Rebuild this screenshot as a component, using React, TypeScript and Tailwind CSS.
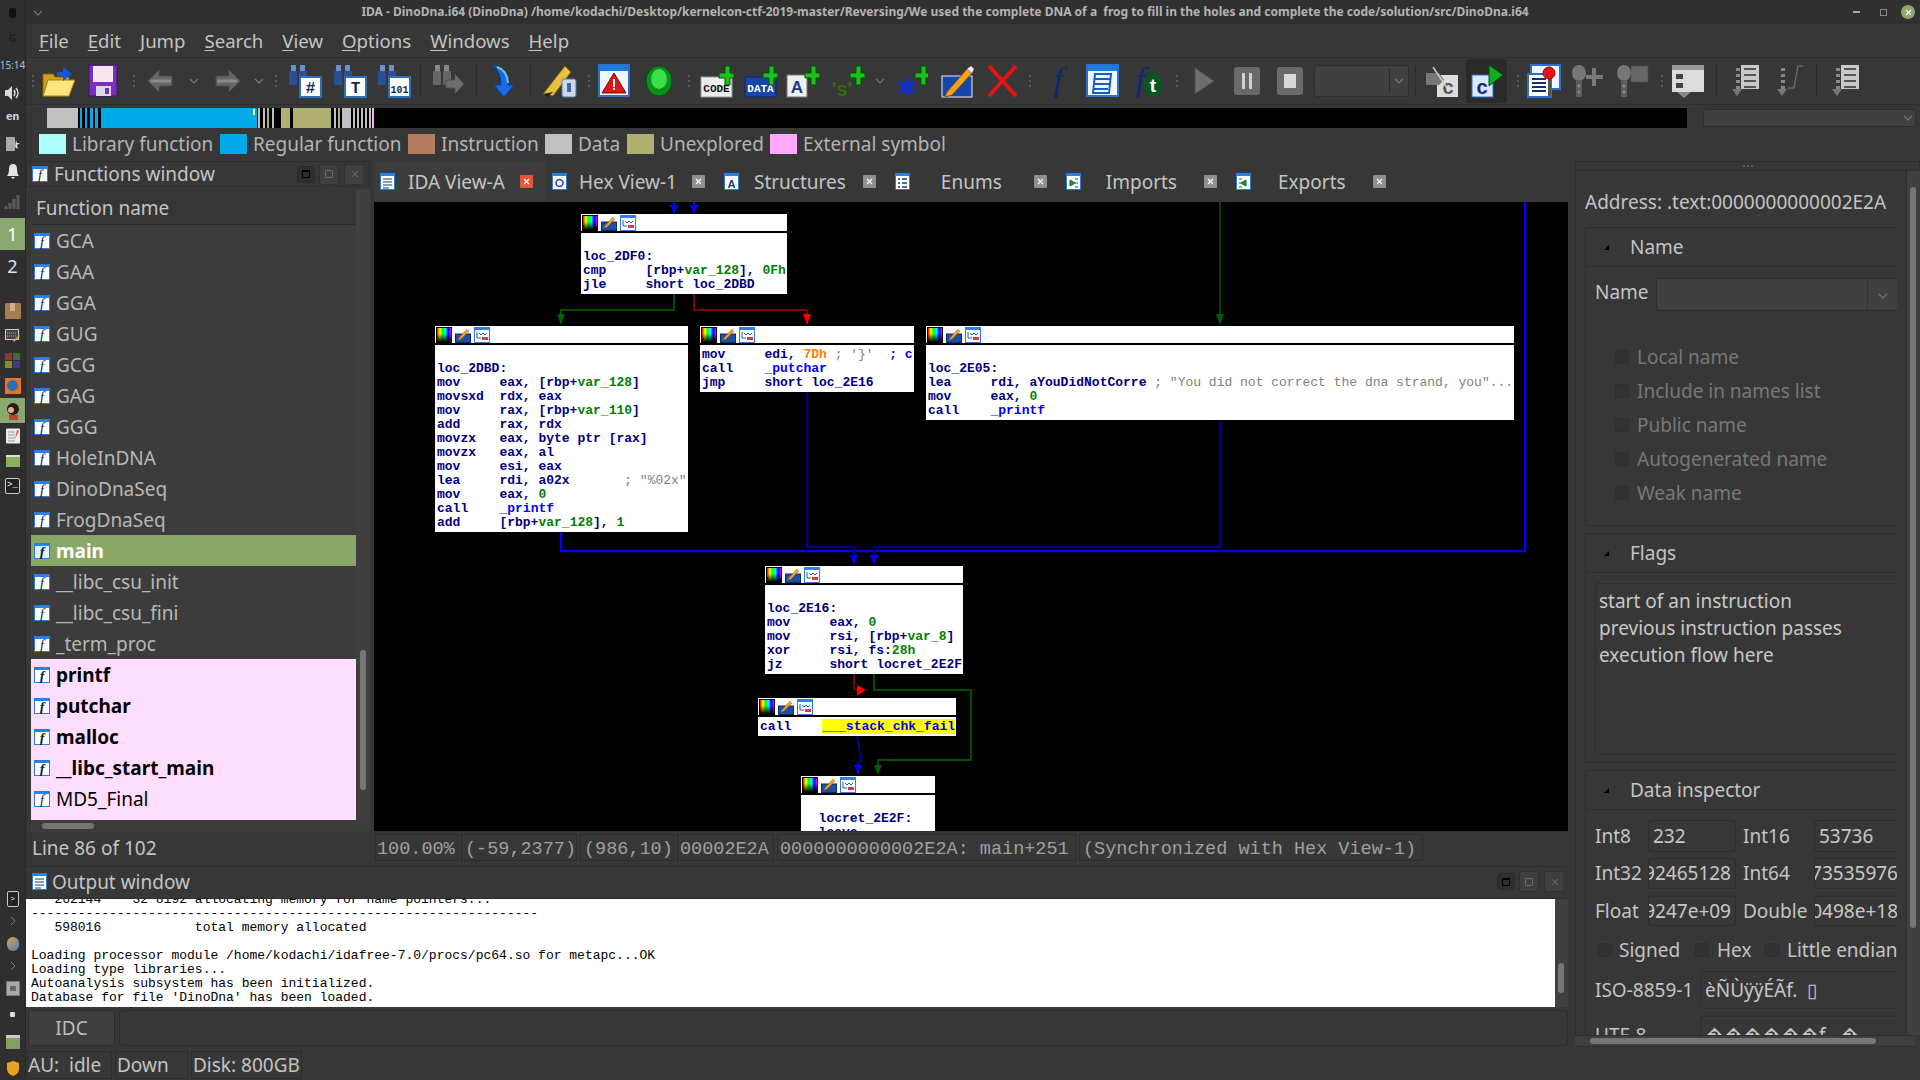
import type { ReactNode } from "react";
import { X } from "lucide-react";

const MONO = "font-['Liberation_Mono',monospace]";

function I({ w, h = 34, children }: { w: number; h?: number; children: ReactNode }) {
  return (
    <svg width={w} height={h} viewBox={`0 0 ${w} ${h}`} className="block shrink-0">
      {children}
    </svg>
  );
}

function Dots() {
  return (
    <span className="flex w-[2px] flex-col gap-[3px]">
      <span className="h-[2px] bg-[#5a5a5a]" />
      <span className="h-[2px] bg-[#5a5a5a]" />
      <span className="h-[2px] bg-[#5a5a5a]" />
    </span>
  );
}

function Sep() {
  return <span className="block h-[32px] w-px bg-[#2a2a2a]" />;
}

function Chev() {
  return (
    <I w={10} h={10}>
      <path d="M1 3 L5 7 L9 3" fill="none" stroke="#777" strokeWidth="1.2" />
    </I>
  );
}

function Plus() {
  return <path d="M19 9 h6 v-7 h5 v7 h4 v5 h-4 v7 h-5 v-7 h-6 z" fill="#19c31c" stroke="#064d08" strokeWidth="1" />;
}

function Binoc({ label, gray }: { label?: string; gray?: boolean }) {
  const c = gray ? "#666" : "#2a4f98";
  return (
    <I w={34}>
      <rect x="3" y="1" width="5" height="6" fill={gray ? "#888" : "#6d8fce"} />
      <rect x="12" y="1" width="5" height="6" fill={gray ? "#888" : "#6d8fce"} />
      <rect x="1" y="7" width="8" height="14" rx="1" fill={c} />
      <rect x="11" y="7" width="8" height="14" rx="1" fill={c} />
      {gray ? (
        <path d="M14 16 h9 v-6 l9 10 l-9 10 v-6 h-9 z" fill="#6e6e6e" stroke="#4e4e4e" />
      ) : (
        <>
          <rect x="12" y="13" width="21" height="20" fill="#fff" stroke="#2f6fb5" strokeWidth="2" />
          <text x="22.5" y="29" textAnchor="middle" fontSize={label === "101" ? 10 : 16} fontWeight="700" fill="#0c2a55" fontFamily="Liberation Mono">
            {label}
          </text>
        </>
      )}
    </I>
  );
}

function Win({ w = 33, children }: { w?: number; children?: ReactNode }) {
  return (
    <I w={w}>
      <rect x="1" y="1" width={w - 2} height="31" fill="#eef6ff" stroke="#2d6fc9" strokeWidth="2" />
      <rect x="2" y="2" width={w - 4} height="5" fill="#1a7be0" />
      {children}
    </I>
  );
}

function GrayPin({ extra }: { extra: ReactNode }) {
  return (
    <I w={33}>
      <ellipse cx="8" cy="9" rx="7" ry="8" fill="#777" />
      <rect x="5" y="16" width="6" height="17" fill="#5e5e5e" />
      <circle cx="8" cy="22" r="1.5" fill="#888" />
      <circle cx="8" cy="28" r="1.5" fill="#888" />
      {extra}
    </I>
  );
}

function GrayList({ w = 32, bars = true }: { w?: number; bars?: boolean }) {
  return (
    <I w={w}>
      {bars && <rect x="12" y="1" width="18" height="24" fill="#c8c8c8" />}
      {[4, 10, 16, 22].map((y) => (
        <g key={y}>
          <rect x="7" y={y} width="4" height="3" fill="#888" />
          {bars && <rect x="15" y={y} width="12" height="2" fill="#555" />}
        </g>
      ))}
      {!bars && <path d="M14 24 L20 24 L24 2 L29 2" fill="none" stroke="#666" strokeWidth="1.5" />}
      <path d="M3 25 h10 l-5 7 z" fill="#777" />
    </I>
  );
}

function FIcon({ size = 16, light }: { size?: number; light?: boolean }) {
  return (
    <svg width={size} height={size} viewBox="0 0 16 16" className="block shrink-0">
      <rect x="0.5" y="0.5" width="15" height="15" fill={light ? "#dff2ff" : "#fff"} stroke="#2f78dc" />
      <rect x="1" y="1" width="14" height="2" fill="#1d87ea" />
      <text x="8" y="13.5" textAnchor="middle" fontSize="14" fontStyle="italic" fontFamily="Liberation Serif" fill="#0b1a44">
        f
      </text>
    </svg>
  );
}

function TabIcon({ kind }: { kind: "list" | "hex" | "a" | "enum" | "imp" | "exp" }) {
  return (
    <svg width="15" height="17" viewBox="0 0 15 17" className="block shrink-0">
      <rect x="0.5" y="0.5" width="14" height="16" fill="#fff" stroke="#2f78dc" />
      <rect x="1" y="1" width="13" height="2" fill="#1d87ea" />
      {kind === "list" && <path d="M3 6 h9 M3 9 h9 M3 12 h9 M3 15 h6" stroke="#123a7c" strokeWidth="1" />}
      {kind === "hex" && <circle cx="7.5" cy="10" r="3.5" fill="none" stroke="#2b3fc6" strokeWidth="1.6" />}
      {kind === "a" && (
        <text x="7.5" y="14.5" textAnchor="middle" fontSize="11" fontWeight="700" fontFamily="Liberation Sans" fill="#123a7c">
          A
        </text>
      )}
      {kind === "enum" && <path d="M3 6 h2 M7 6 h5 M3 10 h2 M7 10 h5 M3 14 h2 M7 14 h5" stroke="#123a7c" strokeWidth="1.4" />}
      {kind === "imp" && <path d="M9 10 l-5 -3 v6 z M9 6 h3 M9 10 h3 M9 14 h3" fill="#0e9a2d" stroke="#0e6a2d" strokeWidth="1" />}
      {kind === "exp" && <path d="M5 10 l5 -3 v6 z M3 6 h3 M3 10 h3 M3 14 h3" fill="#0e9a2d" stroke="#0e6a2d" strokeWidth="1" />}
    </svg>
  );
}

function TabClose({ active }: { active?: boolean }) {
  return (
    <span className={active ? "flex h-[13px] w-[13px] items-center justify-center rounded-[1px] bg-[#e4573c]" : "flex h-[13px] w-[13px] items-center justify-center rounded-[1px] bg-[#8f8f8f]"}>
      <X size={9} color="#fff" strokeWidth={3} />
    </span>
  );
}

function PanelButtons() {
  return (
    <span className="flex items-center">
      <span className="flex h-[17px] w-[18px] items-center justify-center rounded-[3px] border border-[#2c2c2c] bg-[#2f2f2f]">
        <span className="block h-[8px] w-[8px] border border-t-2 border-black" />
      </span>
      <span className="ml-[4px] flex h-[21px] w-[20px] items-center justify-center rounded-[3px] border border-[#2f2f2f] bg-[#3f3f3f]">
        <span className="block h-[8px] w-[8px] rounded-[1px] border border-[#6a6a6a]" />
      </span>
      <span className="ml-[5px] flex h-[21px] w-[21px] items-center justify-center rounded-[3px] border border-[#2f2f2f] bg-[#3f3f3f]">
        <X size={10} color="#6a6a6a" strokeWidth={2.5} />
      </span>
    </span>
  );
}

function NodeHead() {
  return (
    <div className="flex h-[19px] items-center gap-[3px] border-b-2 border-black bg-white pl-[1px]">
      <span className="block h-[16px] w-[16px] border border-black bg-[linear-gradient(to_bottom,transparent_40%,#000),linear-gradient(to_right,#f00,#ff0,#0f0,#0ff,#00f,#f0f)]" />
      <svg width="16" height="16" viewBox="0 0 16 16" className="block shrink-0">
        <rect x="0.5" y="7" width="15" height="8.5" fill="#1d4fa8" stroke="#0c2a66" />
        <path d="M4 11 L12 2 L14 4 L6 12 L3 13 z" fill="#f4a11f" stroke="#a86400" strokeWidth="0.5" />
        <path d="M12 2 L14 4 L15 2 L14 1 z" fill="#dfe7f5" />
      </svg>
      <svg width="16" height="16" viewBox="0 0 16 16" className="block shrink-0">
        <rect x="0.5" y="0.5" width="15" height="15" fill="#fff" stroke="#3b78d8" />
        <rect x="1" y="1" width="14" height="2" fill="#2b84e4" />
        <path d="M3 5 v6 M3 11 h4 M5 6 l2 2 l2 -2 l2 2 l2 -2" fill="none" stroke="#1d5ab8" />
        <rect x="8" y="10" width="6" height="3" fill="#e2363c" />
      </svg>
    </div>
  );
}

function Node({ className, children }: { className: string; children: ReactNode }) {
  return (
    <div className={`absolute overflow-hidden bg-white ${className}`}>
      <NodeHead />
      <pre className={`whitespace-pre px-[2px] pt-[3px] text-[13px] font-bold leading-[14px] text-[#000080] ${MONO}`}>{children}</pre>
    </div>
  );
}

const G = ({ children }: { children: ReactNode }) => <span className="text-[#008000]">{children}</span>;
const C = ({ children }: { children: ReactNode }) => <span className="font-normal text-[#808080]">{children}</span>;
const B = ({ children }: { children: ReactNode }) => <span className="text-[#0000ff]">{children}</span>;
const O = ({ children }: { children: ReactNode }) => <span className="text-[#ff8000]">{children}</span>;

function Graph() {
  return (
    <div className="relative h-[629px] w-[1194px] overflow-hidden bg-black">
      <svg width="1194" height="629" viewBox="374 202 1194 629" className="absolute left-0 top-0">
        <g fill="none">
          <path d="M1525 202 V551 H561 V532" stroke="#0000ff" strokeWidth="2.5" />
          <path d="M674 202 V206 M694 202 V206" stroke="#0000ff" strokeWidth="2" />
          <path d="M1220 202 V318" stroke="#005a00" strokeWidth="1.5" />
          <path d="M674 294 V310 H561 V320" stroke="#005000" strokeWidth="2" />
          <path d="M694 294 V310 H807 V320" stroke="#800000" strokeWidth="2" />
          <path d="M807 392 V547 H854 V556" stroke="#000090" strokeWidth="2" />
          <path d="M1220 420 V547 H874 V556" stroke="#000090" strokeWidth="2" />
          <path d="M854 674 V689 L857 690" stroke="#800000" strokeWidth="2" />
          <path d="M874 674 V690 H971 V760 H878 V766" stroke="#005000" strokeWidth="2" />
          <path d="M857 736 L861 760 L858 764 V768" stroke="#0000c0" strokeWidth="1.5" />
        </g>
        <path d="M670 205 h8 l-4 9 z M690 205 h8 l-4 9 z" fill="#0000ff" />
        <path d="M557 314 h8 l-4 11 z" fill="#006000" />
        <path d="M803 314 h8 l-4 11 z" fill="#ff0000" />
        <path d="M1216 314 h8 l-4 11 z" fill="#006000" />
        <path d="M850 555 h8 l-4 10 z M870 555 h8 l-4 10 z" fill="#0000ff" />
        <path d="M857 685 l9 5 l-9 6 z" fill="#ff0000" />
        <path d="M854 765 h8 l-4 10 z" fill="#0000ff" />
        <path d="M874 765 h8 l-4 10 z" fill="#006000" />
      </svg>

      <Node className="left-[207px] top-[12px] h-[80px] w-[206px]">
        {"\nloc_2DF0:\ncmp     [rbp+"}
        <G>var_128</G>
        {"], "}
        <G>0Fh</G>
        {"\njle     short loc_2DBD"}
      </Node>

      <Node className="left-[61px] top-[124px] h-[206px] w-[253px]">
        {"\nloc_2DBD:\nmov     eax, [rbp+"}
        <G>var_128</G>
        {"]\nmovsxd  rdx, eax\nmov     rax, [rbp+"}
        <G>var_110</G>
        {"]\nadd     rax, rdx\nmovzx   eax, byte ptr [rax]\nmovzx   eax, al\nmov     esi, eax\nlea     rdi, a02x       "}
        <C>{'; "%02x"'}</C>
        {"\nmov     eax, "}
        <G>0</G>
        {"\ncall    "}
        <B>_printf</B>
        {"\nadd     [rbp+"}
        <G>var_128</G>
        {"], "}
        <G>1</G>
      </Node>

      <Node className="left-[326px] top-[124px] h-[66px] w-[214px]">
        {"mov     edi, "}
        <O>7Dh</O> <C>{"; '}'"}</C>
        {"  "}
        <B>; c</B>
        {"\ncall    "}
        <B>_putchar</B>
        {"\njmp     short loc_2E16"}
      </Node>

      <Node className="left-[552px] top-[124px] h-[94px] w-[588px]">
        {"\nloc_2E05:\nlea     rdi, aYouDidNotCorre "}
        <C>{'; "You did not correct the dna strand, you"...'}</C>
        {"\nmov     eax, "}
        <G>0</G>
        {"\ncall    "}
        <B>_printf</B>
      </Node>

      <Node className="left-[391px] top-[364px] h-[108px] w-[198px]">
        {"\nloc_2E16:\nmov     eax, "}
        <G>0</G>
        {"\nmov     rsi, [rbp+"}
        <G>var_8</G>
        {"]\nxor     rsi, fs:"}
        <G>28h</G>
        {"\njz      short locret_2E2F"}
      </Node>

      <Node className="left-[384px] top-[496px] h-[38px] w-[198px]">
        {"call    "}
        <span className="bg-[#ffff00] text-[#0000ff]">___stack_chk_fail</span>
      </Node>

      <Node className="left-[427px] top-[574px] h-[80px] w-[134px]">
        {"\n  locret_2E2F:\n  leave"}
      </Node>
    </div>
  );
}

const functionNames = ["GCA", "GAA", "GGA", "GUG", "GCG", "GAG", "GGG", "HoleInDNA", "DinoDnaSeq", "FrogDnaSeq"];
const libcNames = ["__libc_csu_init", "__libc_csu_fini", "_term_proc"];
const externNames = ["printf", "putchar", "malloc", "__libc_start_main"];

function FnRow({ name, className, light }: { name: string; className: string; light?: boolean }) {
  return (
    <div className={`flex h-[31px] items-center gap-[6px] pl-[3px] text-[19px] ${className}`}>
      <FIcon light={light} />
      <span className="whitespace-pre pt-[2px]">{name}</span>
    </div>
  );
}

function FunctionsPanel() {
  return (
    <div className="flex w-[344px] shrink-0 flex-col">
      <div className="flex h-[26px] items-center border border-[#2d2d2d] pl-[5px] pr-[4px] text-[19px] text-[#c4c4c4]">
        <FIcon />
        <span className="ml-[6px] pt-[1px]">Functions window</span>
        <span className="ml-auto">
          <PanelButtons />
        </span>
      </div>
      <div className="mt-[3px] flex h-[642px] flex-col pl-[5px]">
        <div className="flex min-h-0 flex-1">
          <div className="flex w-[327px] flex-col overflow-hidden bg-[#3c3c3c] text-[#b8b8b8]">
            <div className="flex h-[35px] shrink-0 items-center border-b border-[#2d2d2d] bg-[#363636] pl-[5px] pt-[2px] text-[19px] text-[#c4c4c4]">Function name</div>
            {functionNames.map((n) => (
              <FnRow key={n} name={n} className="" />
            ))}
            <FnRow name="main" className="bg-[#89a868] font-bold text-white" light />
            {libcNames.map((n) => (
              <FnRow key={n} name={n} className="" />
            ))}
            <div className="flex-1 bg-[#ffddff] text-black">
              {externNames.map((n) => (
                <FnRow key={n} name={n} className="font-bold" />
              ))}
              <FnRow name="MD5_Final" className="" />
            </div>
          </div>
          <div className="flex w-[14px] flex-col bg-[#404040] pl-[4px]">
            <span className="mt-[460px] block h-[140px] w-[6px] rounded-full bg-[#767676]" />
          </div>
        </div>
        <div className="h-[12px] shrink-0 bg-[#3c3c3c] pl-[11px] pt-[3px]">
          <span className="block h-[6px] w-[52px] rounded-full bg-[#767676]" />
        </div>
      </div>
      <div className="flex h-[30px] items-center pl-[6px] pt-[3px] text-[19px] text-[#c4c4c4]">Line 86 of 102</div>
    </div>
  );
}

const tabs = [
  { label: "Hex View-1", kind: "hex", gap: "ml-[12px]", after: "ml-[15px]", next: "" },
  { label: "Structures", kind: "a", gap: "ml-[15px]", after: "ml-[17px]", next: "ml-[19px]" },
  { label: "Enums", kind: "enum", gap: "ml-[31px]", after: "ml-[32px]", next: "ml-[19px]" },
  { label: "Imports", kind: "imp", gap: "ml-[25px]", after: "ml-[27px]", next: "ml-[19px]" },
  { label: "Exports", kind: "exp", gap: "ml-[27px]", after: "ml-[27px]", next: "ml-[19px]" },
] as const;

function GraphColumn() {
  return (
    <div className="ml-[4px] flex w-[1194px] shrink-0 flex-col">
      <div className="flex h-[41px] items-center text-[19px] text-[#c4c4c4]">
        <div className="flex h-full w-[171px] items-center bg-[#3c3c3c] pl-[6px]">
          <TabIcon kind="list" />
          <span className="ml-[13px] pt-[2px]">IDA View-A</span>
          <span className="ml-[15px]">
            <TabClose active />
          </span>
        </div>
        <span className="w-[7px]" />
        {tabs.map((t) => (
          <div key={t.label} className={`flex items-center ${t.next}`}>
            <TabIcon kind={t.kind} />
            <span className={`pt-[2px] ${t.gap}`}>{t.label}</span>
            <span className={t.after}>
              <TabClose />
            </span>
          </div>
        ))}
      </div>
      <Graph />
      <div className={`flex h-[31px] items-center gap-[3px] border-t border-[#2d2d2d] pl-[1px] text-[18.5px] text-[#a0a0a0] ${MONO}`}>
        <span className="flex h-[27px] w-[83px] items-center border border-[#2d2d2d] pl-[1px] pt-[6px]">100.00%</span>
        <span className="flex h-[27px] w-[116px] items-center border border-[#2d2d2d] pl-[3px] pt-[6px]">(-59,2377)</span>
        <span className="flex h-[27px] w-[94px] items-center border border-[#2d2d2d] pl-[3px] pt-[6px]">(986,10)</span>
        <span className="flex h-[27px] w-[97px] items-center border border-[#2d2d2d] pl-[2px] pt-[6px]">00002E2A</span>
        <span className="flex h-[27px] w-[299px] items-center border border-[#2d2d2d] pl-[2px] pt-[6px]">0000000000002E2A: main+251</span>
        <span className="flex h-[27px] w-[344px] items-center border border-[#2d2d2d] pl-[3px] pt-[6px]">(Synchronized with Hex View-1)</span>
      </div>
    </div>
  );
}

function OutputPanel() {
  return (
    <div className="mt-[4px] flex w-[1542px] flex-col">
      <div className="flex h-[30px] items-center border-t border-[#2d2d2d] pl-[6px] pr-[3px] text-[19px] text-[#c4c4c4]">
        <TabIcon kind="list" />
        <span className="ml-[5px] pt-[2px]">Output window</span>
        <span className="ml-auto">
          <PanelButtons />
        </span>
      </div>
      <div className="mt-[2px] flex h-[109px] border-t border-[#2d2d2d]">
        <pre className={`h-full w-[1529px] overflow-hidden bg-white pl-[5px] text-[13px] leading-[14px] text-black ${MONO}`}>
          <div className="-mt-[6px]">
            {"   262144    32 8192 allocating memory for name pointers...\n-----------------------------------------------------------------\n   598016            total memory allocated\n\nLoading processor module /home/kodachi/idafree-7.0/procs/pc64.so for metapc...OK\nLoading type libraries...\nAutoanalysis subsystem has been initialized.\nDatabase for file 'DinoDna' has been loaded."}
          </div>
        </pre>
        <div className="flex-1 bg-[#404040] pl-[3px] pt-[64px]">
          <span className="block h-[30px] w-[6px] rounded-full bg-[#767676]" />
        </div>
      </div>
      <div className="mt-[3px] flex h-[36px] gap-[4px] pl-[2px]">
        <span className="flex w-[87px] items-center justify-center rounded-[3px] border border-[#2d2d2d] bg-[#3e3e3e] text-[19px] text-[#bdbdbd]">IDC</span>
        <span className="flex-1 rounded-[3px] border border-[#2d2d2d]" />
      </div>
      <div className="mt-[4px] flex h-[30px] items-center gap-[3px] pl-[1px] text-[19px] text-[#c4c4c4]">
        <span className="flex h-[28px] w-[85px] items-center whitespace-pre border border-[#2d2d2d]">AU:  idle</span>
        <span className="flex h-[28px] w-[73px] items-center border border-[#2d2d2d] pl-[1px]">Down</span>
        <span className="flex h-[28px] w-[111px] items-center border border-[#2d2d2d] pl-[1px]">Disk: 800GB</span>
      </div>
    </div>
  );
}

function Cb() {
  return <span className="block h-[14px] w-[14px] shrink-0 rounded-[2px] border border-[#2e2e2e] bg-[#323232]" />;
}

function GroupHead({ title }: { title: string }) {
  return (
    <div className="flex h-[40px] items-center border border-[#2d2d2d] pl-[18px]">
      <span className="block h-0 w-0 border-b-[5px] border-l-[5px] border-b-black border-l-transparent" />
      <span className="ml-[21px]">{title}</span>
    </div>
  );
}

function ValueBox({ value, className }: { value: string; className: string }) {
  return (
    <span className={`flex h-full items-center overflow-hidden whitespace-pre rounded-[3px] border border-[#2d2d2d] px-[4px] text-[#c8c8c8] ${className}`}>
      {value}
    </span>
  );
}

function InspectorRow({ a, av, b, bv, right, className }: { a: string; av: string; b: string; bv: string; right?: boolean; className: string }) {
  const j = right ? "justify-end" : "";
  return (
    <div className={`flex items-center ${className}`}>
      <span className="w-[53px] shrink-0">{a}</span>
      <ValueBox value={av} className={`w-[88px] shrink-0 ${j}`} />
      <span className="ml-[7px] w-[71px] shrink-0">{b}</span>
      <ValueBox value={bv} className={`w-[89px] shrink-0 ${j}`} />
    </div>
  );
}

function RightPanel() {
  return (
    <div className="ml-[4px] flex w-[345px] flex-col text-[19px] text-[#c4c4c4]">
      <div className="flex h-[10px] items-center justify-center gap-[2px] border border-[#2d2d2d]">
        <span className="h-[2px] w-[2px] bg-[#5a5a5a]" />
        <span className="h-[2px] w-[2px] bg-[#5a5a5a]" />
        <span className="h-[2px] w-[2px] bg-[#5a5a5a]" />
      </div>
      <div className="flex h-[864px] border-l border-[#2d2d2d]">
        <div className="w-[321px] shrink-0 overflow-hidden pl-[9px] pt-[16px]">
          <div className="flex h-[30px] items-center whitespace-pre">Address: .text:0000000000002E2A</div>
          <div className="mt-[10px] w-[321px]">
            <GroupHead title="Name" />
            <div className="h-[259px] border-x border-b border-[#2d2d2d] pl-[9px] pt-[11px]">
              <div className="flex h-[33px]">
                <span className="w-[61px] shrink-0">Name</span>
                <span className="flex w-[243px] rounded-[3px] border border-[#2d2d2d] bg-[#404040]">
                  <span className="flex-1" />
                  <span className="flex w-[31px] items-center justify-center border-l border-[#333] pt-[3px]">
                    <Chev />
                  </span>
                </span>
              </div>
              <div className="mt-[29px] pl-[20px] text-[#777]">
                {["Local name", "Include in names list", "Public name", "Autogenerated name", "Weak name"].map((n) => (
                  <div key={n} className="flex h-[34px] items-center gap-[8px]">
                    <Cb />
                    <span>{n}</span>
                  </div>
                ))}
              </div>
            </div>
            <div className="mt-[7px]">
              <GroupHead title="Flags" />
              <div className="h-[190px] border-x border-b border-[#2d2d2d] pl-[9px] pt-[10px]">
                <div className="h-[172px] w-[307px] rounded-[3px] border border-[#2d2d2d] pl-[3px] pt-[4px] leading-[27px] text-[#c8c8c8]">
                  start of an instruction
                  <br />
                  previous instruction passes
                  <br />
                  execution flow here
                </div>
              </div>
            </div>
            <div className="mt-[7px]">
              <GroupHead title="Data inspector" />
              <div className="h-[300px] border-x border-[#2d2d2d] pl-[9px] pt-[10px]">
                <InspectorRow a="Int8" av="232" b="Int16" bv="53736" className="h-[32px]" />
                <InspectorRow a="Int32" av="3892465128" b="Int64" bv="-4673535976" right className="mt-[6px] h-[31px]" />
                <InspectorRow a="Float" av="-1.19247e+09" b="Double" bv="1.10498e+18" right className="mt-[7px] h-[30px]" />
                <div className="mt-[14px] flex h-[20px] items-center pl-[3px]">
                  <Cb />
                  <span className="ml-[7px] w-[76px]">Signed</span>
                  <Cb />
                  <span className="ml-[8px] w-[48px]">Hex</span>
                  <Cb />
                  <span className="ml-[8px] whitespace-nowrap">Little endian</span>
                </div>
                <div className="mt-[11px] flex h-[38px] items-center">
                  <span className="w-[105px] shrink-0">ISO-8859-1</span>
                  <ValueBox value={"èÑÙÿÿÉÃf.  ▯"} className="w-[202px]" />
                </div>
                <div className="mt-[7px] flex h-[38px] items-center">
                  <span className="w-[105px] shrink-0">UTF-8</span>
                  <ValueBox value={"������f.  �"} className="w-[202px]" />
                </div>
              </div>
            </div>
          </div>
        </div>
        <div className="ml-[9px] w-[14px] shrink-0 border-l border-[#2d2d2d] bg-[#404040] pl-[3px] pt-[16px]">
          <span className="block h-[741px] w-[6px] rounded-full bg-[#767676]" />
        </div>
      </div>
      <div className="h-[12px] w-[340px] border-y border-[#2d2d2d] bg-[#3e3e3e] pl-[15px] pt-[2px]">
        <span className="block h-[6px] w-[286px] rounded-full bg-[#767676]" />
      </div>
    </div>
  );
}

const navSegments: [number, string][] = [
  [31, "#c0c0c0"], [2, "#000"], [2, "#00aae8"], [3, "#000"], [2, "#00aae8"], [3, "#000"], [3, "#00aae8"], [2, "#000"], [3, "#00aae8"], [3, "#000"], [2, "#00aae8"],
  [154, "#00aae8"], [1, "#000"], [2, "#c0c0c0"], [3, "#000"], [2, "#c0c0c0"], [2, "#000"], [2, "#b0b070"], [3, "#000"], [2, "#c0c0c0"], [7, "#000"], [9, "#b0b070"], [3, "#000"],
  [38, "#b0b070"], [3, "#000"], [2, "#c0c0c0"], [2, "#000"], [2, "#b0b070"], [2, "#000"], [9, "#c0c0c0"], [2, "#000"], [2, "#c0c0c0"], [2, "#000"], [2, "#c0c0c0"], [2, "#000"], [2, "#c0c0c0"], [2, "#000"], [2, "#c0c0c0"], [2, "#000"], [2, "#c0c0c0"], [1, "#000"], [2, "#ffaaff"],
];

const legend = [
  ["#aaffff", "Library function", "w-[181px]"],
  ["#00aae8", "Regular function", "w-[188px]"],
  ["#b27c5c", "Instruction", "w-[137px]"],
  ["#c0c0c0", "Data", "w-[82px]"],
  ["#b0b070", "Unexplored", "w-[143px]"],
  ["#ffaaff", "External symbol", "w-[190px]"],
] as const;

function DockIcon({ className, children }: { className: string; children: ReactNode }) {
  return <div className={`flex w-full shrink-0 items-center justify-center ${className}`}>{children}</div>;
}

function Dock() {
  return (
    <div className="flex h-[1080px] w-[26px] shrink-0 flex-col border-r border-[#262626] bg-[#2f2f2f] text-[#d0d0d0]">
      <DockIcon className="h-[26px]">
        <span className="block h-[10px] w-[7px] rounded-[2px] bg-[#111]" />
      </DockIcon>
      <DockIcon className="h-[24px] text-[11px] font-bold text-[#222]">G</DockIcon>
      <DockIcon className="h-[30px] text-[10px] text-[#a9bfd0]">15:14</DockIcon>
      <DockIcon className="h-[25px]">
        <I w={17} h={16}>
          <path d="M1 5 h3 l4 -4 v14 l-4 -4 h-3 z" fill="#d8d8d8" />
          <path d="M10 5 q2 3 0 6 M12 3 q4 5 0 10" fill="none" stroke="#d8d8d8" strokeWidth="1.4" />
        </I>
      </DockIcon>
      <DockIcon className={`h-[25px] text-[11px] font-bold text-[#d8e0e8] ${MONO}`}>en</DockIcon>
      <DockIcon className="h-[27px]">
        <I w={16} h={16}>
          <rect x="1" y="1" width="9" height="14" rx="1" fill="#aaa" />
          <path d="M11 4 l1 3 h3 l-3 2 l1 4 l-3 -2 z" fill="#ddd" />
        </I>
      </DockIcon>
      <DockIcon className="h-[28px]">
        <I w={14} h={16}>
          <path d="M7 1 q4 0 4 5 q0 5 2 7 h-12 q2 -2 2 -7 q0 -5 4 -5 z M5 14 h4 l-2 2 z" fill="#e4e4e4" />
        </I>
      </DockIcon>
      <DockIcon className="h-[33px]">
        <I w={17} h={16}>
          <path d="M2 12 v3 M6 9 v6 M10 5 v10 M14 1 v14" stroke="#5b5b5b" strokeWidth="3" />
        </I>
      </DockIcon>
      <DockIcon className="h-[32px] bg-[#8ba870] text-[18px] text-white">1</DockIcon>
      <DockIcon className="h-[32px] text-[18px] text-[#d8e4f0]">2</DockIcon>
      <div className="h-[16px]" />
      <DockIcon className="h-[25px]">
        <span className="flex h-[16px] w-[16px] justify-center rounded-[1px] bg-[#a67c50]">
          <span className="block h-[8px] w-[5px] bg-[#cfae88]" />
        </span>
      </DockIcon>
      <DockIcon className="h-[25px]">
        <I w={16} h={14}>
          <rect x="0.5" y="0.5" width="13" height="10" fill="#444" stroke="#ccc" />
          <path d="M2 4 h10 M2 7 h10" stroke="#aaa" strokeDasharray="1 1" />
          <path d="M8 12 l6 -6 l1 1 l-6 6 z" fill="#e8a23c" />
        </I>
      </DockIcon>
      <DockIcon className="h-[25px]">
        <span className="grid grid-cols-2 gap-px">
          <span className="block h-[7px] w-[7px] bg-[#8a3a3a]" />
          <span className="block h-[7px] w-[7px] bg-[#3c6a3c]" />
          <span className="block h-[7px] w-[7px] bg-[#8a8a30]" />
          <span className="block h-[7px] w-[7px] bg-[#453a8a]" />
        </span>
      </DockIcon>
      <DockIcon className="h-[25px]">
        <span className="flex h-[16px] w-[16px] items-center justify-center bg-[#e8761c]">
          <span className="block h-[11px] w-[11px] rounded-full bg-[#2f6fb0]" />
        </span>
      </DockIcon>
      <DockIcon className="h-[25px] bg-[#8ba870]">
        <I w={16} h={18}>
          <circle cx="8" cy="7" r="6" fill="#2a1a1a" />
          <circle cx="6" cy="8" r="3" fill="#e0b090" />
          <path d="M4 13 h9 v5 h-9 z" fill="#c8402a" />
        </I>
      </DockIcon>
      <DockIcon className="h-[25px]">
        <I w={16} h={16}>
          <rect x="1" y="0.5" width="14" height="15" rx="1" fill="#eee" />
          <path d="M3 4 h7 M3 7 h7 M3 10 h7 M3 13 h7" stroke="#999" />
          <path d="M10 11 l2 -9 l2 1 z" fill="#e2562a" />
        </I>
      </DockIcon>
      <DockIcon className="h-[25px]">
        <I w={16} h={14}>
          <rect x="1" y="1" width="14" height="3" fill="#ddd" />
          <rect x="1" y="3" width="14" height="10" fill="#8ab060" />
        </I>
      </DockIcon>
      <DockIcon className="h-[25px]">
        <span className={`flex h-[16px] w-[15px] items-center justify-center rounded-[2px] border border-[#ccc] bg-[#222] text-[9px] text-white ${MONO}`}>&gt;_</span>
      </DockIcon>
      <div className="flex-1" />
      <DockIcon className="h-[24px]">
        <span className={`flex h-[16px] w-[12px] items-center justify-center rounded-[2px] border border-[#ccc] bg-[#222] text-[7px] text-white ${MONO}`}>&gt;</span>
      </DockIcon>
      <DockIcon className="h-[20px] text-[#777]">
        <I w={6} h={10}>
          <path d="M1 1 l4 4 l-4 4" fill="none" stroke="#777" />
        </I>
      </DockIcon>
      <DockIcon className="h-[25px]">
        <span className="block h-[14px] w-[12px] rounded-full bg-[linear-gradient(135deg,#e8a23c,#3f7fcf)]" />
      </DockIcon>
      <DockIcon className="h-[20px]">
        <I w={6} h={10}>
          <path d="M1 1 l4 4 l-4 4" fill="none" stroke="#777" />
        </I>
      </DockIcon>
      <DockIcon className="h-[25px]">
        <span className="flex h-[15px] w-[14px] items-center justify-center border border-[#777] bg-[#aaa]">
          <span className="block h-[5px] w-[6px] bg-[#666]" />
        </span>
      </DockIcon>
      <DockIcon className="h-[26px]">
        <span className="block h-[5px] w-[5px] rounded-[1px] bg-[#ddd]" />
      </DockIcon>
      <DockIcon className="h-[30px]">
        <span className="flex h-[14px] w-[14px] flex-col">
          <span className="h-[3px] bg-[#ccc]" />
          <span className="flex-1 bg-[#7fa060]" />
        </span>
      </DockIcon>
      <DockIcon className="h-[23px]">
        <I w={12} h={15}>
          <path d="M6 0 l6 2 v6 q0 5 -6 7 q-6 -2 -6 -7 v-6 z" fill="#f0a020" />
        </I>
      </DockIcon>
    </div>
  );
}

function Toolbar() {
  return (
    <div className="flex h-[48px] items-center border-y border-[#2d2d2d]">
      <span className="ml-[6px]"><Dots /></span>
      <span className="ml-[8px]">
        <I w={34}>
          <path d="M1 10 h10 l2 3 h14 v19 h-26 z" fill="#d4a017" stroke="#8a6508" />
          <path d="M6 16 h27 l-6 16 h-26 z" fill="#ffe680" stroke="#a57c08" />
          <path d="M15 8 h6 v-5 l9 7 l-9 7 v-5 h-6 z" fill="#1357e0" />
        </I>
      </span>
      <span className="ml-[12px]">
        <I w={30}>
          <rect x="1" y="1" width="28" height="31" fill="#7b2fc0" stroke="#3c1470" />
          <rect x="5" y="2" width="20" height="16" fill="#f5e8f0" />
          <rect x="8" y="22" width="15" height="10" fill="#d8d8e8" />
          <rect x="17" y="24" width="4" height="6" fill="#7b2fc0" />
        </I>
      </span>
      <span className="ml-[15px]"><Dots /></span>
      <span className="ml-[12px]">
        <I w={26}>
          <path d="M1 17 l11 -11 v6 h13 v10 h-13 v6 z" fill="#666" stroke="#4e4e4e" />
          <path d="M4 17 h20" stroke="#8a8a8a" strokeWidth="3" />
        </I>
      </span>
      <span className="ml-[16px]"><Chev /></span>
      <span className="ml-[16px]">
        <I w={26}>
          <path d="M25 17 l-11 -11 v6 h-13 v10 h13 v6 z" fill="#666" stroke="#4e4e4e" />
          <path d="M2 17 h20" stroke="#8a8a8a" strokeWidth="3" />
        </I>
      </span>
      <span className="ml-[13px]"><Chev /></span>
      <span className="ml-[11px]"><Dots /></span>
      <span className="ml-[11px]"><Binoc label="#" /></span>
      <span className="ml-[11px]"><Binoc label="T" /></span>
      <span className="ml-[10px]"><Binoc label="101" /></span>
      <span className="ml-[9px]"><Sep /></span>
      <span className="ml-[11px]"><Binoc gray /></span>
      <span className="ml-[10px]"><Sep /></span>
      <span className="ml-[13px]">
        <I w={26}>
          <path d="M3 1 q15 2 15 20 h6 l-10 12 l-10 -12 h7 q0 -13 -8 -20 z" fill="#1b6be8" stroke="#0c3fa0" />
          <path d="M7 3 q10 3 11 16" fill="none" stroke="#5cc8f8" strokeWidth="2" />
        </I>
      </span>
      <span className="ml-[14px]"><Sep /></span>
      <span className="ml-[10px]">
        <I w={36}>
          <path d="M2 30 L16 12 L24 2 L30 8 L12 32 z" fill="#e8c13c" stroke="#7a5c10" />
          <path d="M2 30 l5 3 l5 -5 z" fill="#222" />
          <rect x="21" y="15" width="14" height="18" rx="2" fill="#cfd8e6" stroke="#5578a8" />
          <rect x="26" y="19" width="4" height="9" fill="#3a68a8" />
        </I>
      </span>
      <span className="ml-[11px]"><Dots /></span>
      <span className="ml-[8px]">
        <Win w={32}>
          <path d="M16 9 L28 29 H4 z" fill="#e01616" stroke="#7a0b0b" />
          <rect x="15" y="15" width="2" height="8" fill="#fff" />
          <rect x="15" y="24" width="2" height="2" fill="#fff" />
        </Win>
      </span>
      <span className="ml-[15px]">
        <I w={28}>
          <ellipse cx="14" cy="17" rx="13" ry="15" fill="#0c8f1a" stroke="#074f0e" />
          <ellipse cx="14" cy="15" rx="8" ry="10" fill="#3be048" />
        </I>
      </span>
      <span className="ml-[15px]"><Dots /></span>
      {["CODE", "DATA"].map((t, i) => (
        <span key={t} className="ml-[10px]">
          <I w={34}>
            <rect x="1" y="13" width="31" height="20" fill={i === 0 ? "#eee" : "#1746a8"} stroke={i === 0 ? "#999" : "#0c2a66"} />
            <text x="16.5" y="28" textAnchor="middle" fontSize="11" fontWeight="700" fontFamily="Liberation Mono" fill={i === 0 ? "#111" : "#fff"}>{t}</text>
            <Plus />
          </I>
        </span>
      ))}
      <span className="ml-[8px]">
        <I w={34}>
          <rect x="1" y="11" width="20" height="22" fill="#eee" stroke="#777" />
          <text x="11" y="29" textAnchor="middle" fontSize="17" fontWeight="700" fontFamily="Liberation Sans" fill="#1c3d7a">A</text>
          <Plus />
        </I>
      </span>
      <span className="ml-[11px]">
        <I w={34}>
          <text x="11" y="32" textAnchor="middle" fontSize="20" fontWeight="700" fontFamily="Liberation Sans" fill="#2f6a10">'s'</text>
          <Plus />
        </I>
      </span>
      <span className="ml-[10px]"><Chev /></span>
      <span className="ml-[11px]">
        <I w={32}>
          <path d="M11 14 v18 M3 18 l16 10 M19 18 l-16 10" stroke="#1030d0" strokeWidth="3.5" />
          <Plus />
        </I>
      </span>
      <span className="ml-[13px]">
        <I w={34}>
          <rect x="1" y="12" width="30" height="21" fill="#1746a8" stroke="#eee" />
          <path d="M6 28 L26 5 L31 9 L11 31 L4 33 z" fill="#f4a11f" stroke="#8a5a00" />
          <path d="M26 5 L31 9 L33 5 L30 2 z" fill="#e8e8f8" />
        </I>
      </span>
      <span className="ml-[11px]">
        <I w={33}>
          <path d="M3 2 L30 32 M30 2 L3 32" stroke="#e81212" strokeWidth="4" />
        </I>
      </span>
      <span className="ml-[10px]"><Dots /></span>
      <span className="ml-[15px]">
        <I w={24}>
          <text x="12" y="28" textAnchor="middle" fontSize="36" fontStyle="italic" fontFamily="Liberation Serif" fill="#0e2a6e">f</text>
        </I>
      </span>
      <span className="ml-[16px]">
        <Win>
          <path d="M9 10 h16 l-2 19 h-16 z" fill="none" stroke="#1460c0" strokeWidth="2" />
          <path d="M9 15 h15 M8 20 h15 M7 25 h15" stroke="#1460c0" strokeWidth="2" />
        </Win>
      </span>
      <span className="ml-[10px]">
        <I w={34}>
          <text x="11" y="28" textAnchor="middle" fontSize="36" fontStyle="italic" fontFamily="Liberation Serif" fill="#0e2a6e">f</text>
          <ellipse cx="24" cy="21" rx="9" ry="12" fill="#06591e" />
          <text x="24" y="28" textAnchor="middle" fontSize="19" fontWeight="700" fontFamily="Liberation Sans" fill="#fff">t</text>
        </I>
      </span>
      <span className="ml-[13px]"><Dots /></span>
      <span className="ml-[14px]">
        <I w={24}>
          <path d="M3 4 L22 17 L3 30 z" fill="#6e6e6e" stroke="#4e4e4e" />
        </I>
      </span>
      <span className="ml-[18px]">
        <I w={26}>
          <rect x="0" y="3" width="26" height="28" rx="3" fill="#6a6a6a" />
          <rect x="8" y="9" width="3" height="16" fill="#cfcfcf" />
          <rect x="15" y="9" width="3" height="16" fill="#cfcfcf" />
        </I>
      </span>
      <span className="ml-[17px]">
        <I w={26}>
          <rect x="0" y="3" width="26" height="28" rx="3" fill="#6a6a6a" />
          <rect x="7" y="10" width="12" height="14" fill="#d8d8d8" />
        </I>
      </span>
      <span className="ml-[11px] flex h-[32px] w-[95px] items-center justify-end rounded-[3px] border border-[#2d2d2d] bg-[#404040] pr-[4px]">
        <span className="mr-[4px] h-[24px] w-px bg-[#2a2a2a]" />
        <Chev />
      </span>
      <span className="ml-[6px]"><Sep /></span>
      <span className="ml-[9px]">
        <I w={34}>
          <rect x="12" y="11" width="21" height="22" fill="#ddd" />
          <text x="23" y="30" textAnchor="middle" fontSize="20" fontWeight="700" fontFamily="Liberation Sans" fill="#555">c</text>
          <path d="M1 9 h13 l5 7 l-5 5 h-13 z" fill="#777" />
          <path d="M8 3 L22 24" stroke="#ccc" strokeWidth="1.5" />
        </I>
      </span>
      <span className="ml-[7px] flex h-[44px] w-[41px] items-center justify-center rounded-[3px] bg-[#2a2a2a]">
        <I w={34}>
          <rect x="2" y="11" width="21" height="22" fill="#dbe8f8" stroke="#2d6fc9" />
          <text x="12" y="30" textAnchor="middle" fontSize="20" fontWeight="700" fontFamily="Liberation Sans" fill="#0c2a88">c</text>
          <path d="M19 1 L33 11 L19 22 z" fill="#0fae20" stroke="#064d08" />
        </I>
      </span>
      <span className="ml-[10px]"><Dots /></span>
      <span className="ml-[8px]">
        <I w={34}>
          <rect x="4" y="1" width="29" height="24" fill="#eef6ff" stroke="#2d6fc9" strokeWidth="2" />
          <rect x="1" y="10" width="23" height="23" fill="#fff" stroke="#2d6fc9" strokeWidth="2" />
          <path d="M5 15 h14 M5 19 h14 M5 23 h14 M5 27 h14" stroke="#16306e" strokeWidth="2" />
          <rect x="21" y="14" width="3" height="18" fill="#555" />
          <circle cx="22" cy="9" r="6" fill="#e81212" stroke="#8a0a0a" />
        </I>
      </span>
      <span className="ml-[10px]">
        <GrayPin extra={<path d="M15 11 h6 v-7 h4 v7 h7 v4 h-7 v7 h-4 v-7 h-6 z" fill="#7a7a7a" />} />
      </span>
      <span className="ml-[12px]">
        <GrayPin extra={<path d="M15 2 h17 v16 h-17 z" fill="#7a7a7a" opacity="0.7" stroke="#555" strokeDasharray="3 2" />} />
      </span>
      <span className="ml-[12px]"><Dots /></span>
      <span className="ml-[8px]">
        <I w={34}>
          <rect x="1" y="1" width="32" height="27" fill="#dcdcdc" />
          <rect x="1" y="1" width="32" height="5" fill="#999" />
          <rect x="5" y="10" width="7" height="5" fill="#444" />
          <rect x="5" y="19" width="7" height="5" fill="#444" />
          <path d="M6 28 h14 l-7 6 z" fill="#888" />
        </I>
      </span>
      <span className="ml-[11px]"><Sep /></span>
      <span className="ml-[12px]"><GrayList /></span>
      <span className="ml-[13px]"><GrayList bars={false} /></span>
      <span className="ml-[10px]"><Sep /></span>
      <span className="ml-[12px]"><GrayList /></span>
    </div>
  );
}

export default function App() {
  return (
    <div className="flex h-[1080px] w-[1920px] overflow-hidden bg-[#373737] font-['Noto_Sans',sans-serif]">
      <Dock />
      <div className="flex min-w-0 flex-1 flex-col">
        <div className="relative flex h-[24px] shrink-0 items-center justify-center bg-[#303030] pr-[56px] text-[12px] font-bold text-[#b4b4b4]">
          <span className="absolute left-[7px] top-[8px]">
            <Chev />
          </span>
          <span className="whitespace-pre">IDA - DinoDna.i64 (DinoDna) /home/kodachi/Desktop/kernelcon-ctf-2019-master/Reversing/We used the complete DNA of a  frog to fill in the holes and complete the code/solution/src/DinoDna.i64</span>
          <span className="absolute right-[5px] top-[5px] flex items-center">
            <span className="block h-[2px] w-[7px] bg-[#aaa]" />
            <span className="ml-[20px] block h-[7px] w-[7px] border border-[#888]" />
            <span className="ml-[14px] flex h-[14px] w-[14px] items-center justify-center rounded-full bg-[#8ba870]">
              <X size={9} color="#fff" strokeWidth={3} />
            </span>
          </span>
        </div>
        <div className="flex h-[33px] shrink-0 items-center gap-[19px] pl-[13px] text-[18.6px] text-[#c4c4c4]">
          <span><span className="underline underline-offset-2">F</span>ile</span>
          <span><span className="underline underline-offset-2">E</span>dit</span>
          <span><span className="underline underline-offset-2">J</span>ump</span>
          <span><span className="underline underline-offset-2">S</span>earch</span>
          <span><span className="underline underline-offset-2">V</span>iew</span>
          <span><span className="underline underline-offset-2">O</span>ptions</span>
          <span><span className="underline underline-offset-2">W</span>indows</span>
          <span><span className="underline underline-offset-2">H</span>elp</span>
        </div>
        <Toolbar />
        <div className="flex h-[25px] shrink-0 items-center pl-[21px]">
          <div className="relative flex h-[20px] w-[1640px] bg-black">
            {navSegments.map(([w, c], i) => (
              <span key={i} className="block h-full shrink-0" style={{ width: w, background: c }} />
            ))}
            <span className="absolute left-[206px] top-[1px] block h-[6px] w-[2px] bg-[#ffff40]" />
          </div>
          <span className="ml-[16px] flex h-[18px] w-[213px] items-center justify-end rounded-[3px] border border-[#2d2d2d] bg-[#404040] pr-[2px]">
            <Chev />
          </span>
        </div>
        <div className="flex h-[28px] shrink-0 items-center pl-[13px] text-[19px] text-[#b4b4b4]">
          {legend.map(([c, t, w]) => (
            <span key={t} className={`flex items-center gap-[6px] ${w}`}>
              <span className="block h-[20px] w-[27px] shrink-0" style={{ background: c }} />
              <span className="whitespace-pre">{t}</span>
            </span>
          ))}
        </div>
        <div className="mt-[3px] flex min-h-0 flex-1">
          <div className="flex w-[1545px] shrink-0 flex-col">
            <div className="flex h-[701px]">
              <FunctionsPanel />
              <GraphColumn />
            </div>
            <OutputPanel />
          </div>
          <RightPanel />
        </div>
      </div>
    </div>
  );
}
